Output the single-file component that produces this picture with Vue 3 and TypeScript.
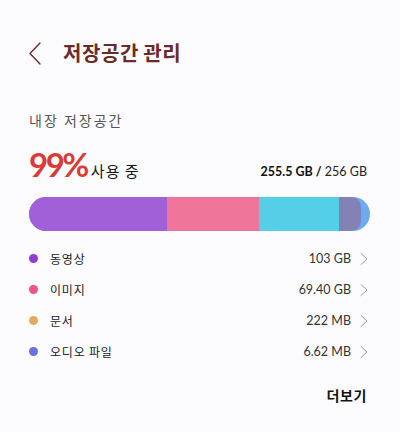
<script setup lang="ts">
interface Item { name: string; size: string; color: string }
const items: Item[] = [
  { name: '동영상', size: '103 GB', color: '#8e3fd0' },
  { name: '이미지', size: '69.40 GB', color: '#ec5585' },
  { name: '문서', size: '222 MB', color: '#e2ac5f' },
  { name: '오디오 파일', size: '6.62 MB', color: '#6a70e0' },
]
</script>

<template>
  <main class="page">
    <header class="header">
      <svg class="back" width="14" height="24" viewBox="0 0 14 24" fill="none">
        <path d="M11 2 L1 12.5 L11 23" stroke="#6b2a2a" stroke-width="1.4" stroke-linecap="round" stroke-linejoin="round" />
      </svg>
      <h1 class="title">저장공간 관리</h1>
    </header>

    <section class="storage">
      <h2 class="label">내장 저장공간</h2>
      <div class="summary">
        <div class="used">
          <span class="percent">99%</span>
          <span class="used-text">사용 중</span>
        </div>
        <div class="capacity"><b>255.5 GB /</b> 256 GB</div>
      </div>

      <div class="bar">
        <div class="seg video"></div>
        <div class="seg image"></div>
        <div class="seg cyan"></div>
        <div class="seg audio"></div>
      </div>

      <ul class="list">
        <li v-for="item in items" :key="item.name" class="row">
          <span class="dot" :style="{ background: item.color }"></span>
          <span class="name">{{ item.name }}</span>
          <span class="size">{{ item.size }}</span>
          <svg class="chev" width="8" height="14" viewBox="0 0 8 14" fill="none">
            <path d="M1 1.5 L7 7 L1 12.5" stroke="#9a9a9e" stroke-width="1" stroke-linecap="round" stroke-linejoin="round" />
          </svg>
        </li>
      </ul>

      <div class="more-wrap"><span class="more">더보기</span></div>
    </section>
  </main>
</template>

<style scoped>
.page {
  box-sizing: border-box;
  width: 400px;
  height: 432px;
  padding: 41px 30px 0 29px;
  background: #fcfcff;
  font-family: "Noto Sans CJK KR", "Noto Sans", sans-serif;
  color: #222;
  overflow: hidden;
}
.header {
  display: flex;
  align-items: center;
  gap: 20px;
  height: 24px;
}
.title {
  margin: 0;
  font-size: 20px;
  line-height: 24px;
  font-weight: 700;
  letter-spacing: 0.6px;
  word-spacing: -1px;
  color: #6b2a2a;
}
.storage {
  margin-top: 45px;
}
.label {
  margin: 0;
  font-size: 14px;
  line-height: 20px;
  font-weight: 400;
  letter-spacing: 2px;
  color: #555;
}
.summary {
  margin-top: 19px;
  display: flex;
  justify-content: space-between;
  align-items: flex-end;
  height: 32px;
  padding-right: 3px;
}
.used {
  display: flex;
  align-items: baseline;
  gap: 4px;
}
.percent {
  font-family: "Lato", "Noto Sans", sans-serif;
  font-size: 33px;
  line-height: 32px;
  font-weight: 700;
  letter-spacing: -2.5px;
  color: #d83c3a;
}
.used-text {
  font-size: 15px;
  line-height: 20px;
  letter-spacing: 1px;
  color: #111;
}
.capacity {
  font-family: "Lato", "Noto Sans", sans-serif;
  font-size: 12.5px;
  line-height: 18px;
  color: #222;
}
.capacity b {
  font-weight: 700;
  color: #111;
}
.bar {
  margin-top: 16px;
  display: flex;
  height: 34px;
  width: 341px;
  border-radius: 17px;
  overflow: hidden;
  background: #6cabf0;
}
.seg {
  height: 100%;
}
.video { width: 137.5px; background: #9f60d8; }
.image { width: 92.5px; background: #f0759b; }
.cyan { width: 80px; background: #55cfe8; }
.audio { width: 22px; background: #8282b6; border-radius: 0 10px 10px 0; }
.list {
  margin: 12px 0 0;
  padding: 0;
  list-style: none;
}
.row {
  display: flex;
  align-items: center;
  height: 31px;
}
.dot {
  width: 9px;
  height: 9px;
  border-radius: 50%;
}
.name {
  margin-left: 12px;
  flex: 1;
  font-size: 12px;
  letter-spacing: 0.8px;
  color: #222;
}
.size {
  font-family: "Lato", "Noto Sans", sans-serif;
  font-size: 12.5px;
  color: #333;
}
.chev {
  margin-left: 9px;
  margin-right: 2px;
}
.more-wrap {
  margin-top: 18px;
  display: flex;
  justify-content: flex-end;
  padding-right: 3px;
}
.more {
  font-size: 14px;
  line-height: 20px;
  font-weight: 700;
  letter-spacing: 0.6px;
  color: #111;
}
</style>
